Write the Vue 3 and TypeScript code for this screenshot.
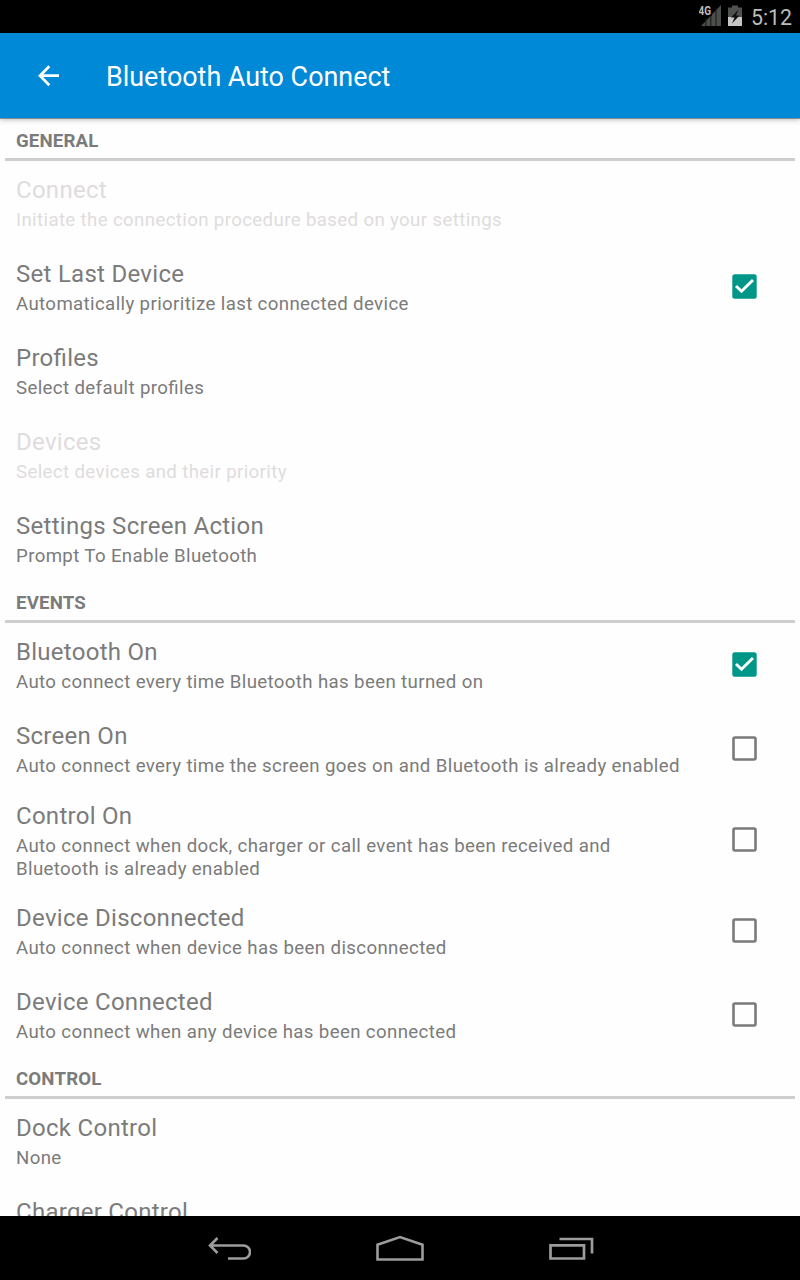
<script setup lang="ts">
interface Pref {
  title: string
  summary: string[]
  disabled?: boolean
  checked?: boolean
}
interface Section {
  name: string
  items: Pref[]
}

const sections: Section[] = [
  {
    name: 'GENERAL',
    items: [
      { title: 'Connect', summary: ['Initiate the connection procedure based on your settings'], disabled: true },
      { title: 'Set Last Device', summary: ['Automatically prioritize last connected device'], checked: true },
      { title: 'Profiles', summary: ['Select default profiles'] },
      { title: 'Devices', summary: ['Select devices and their priority'], disabled: true },
      { title: 'Settings Screen Action', summary: ['Prompt To Enable Bluetooth'] },
    ],
  },
  {
    name: 'EVENTS',
    items: [
      { title: 'Bluetooth On', summary: ['Auto connect every time Bluetooth has been turned on'], checked: true },
      { title: 'Screen On', summary: ['Auto connect every time the screen goes on and Bluetooth is already enabled'], checked: false },
      { title: 'Control On', summary: ['Auto connect when dock, charger or call event has been received and', 'Bluetooth is already enabled'], checked: false },
      { title: 'Device Disconnected', summary: ['Auto connect when device has been disconnected'], checked: false },
      { title: 'Device Connected', summary: ['Auto connect when any device has been connected'], checked: false },
    ],
  },
  {
    name: 'CONTROL',
    items: [
      { title: 'Dock Control', summary: ['None'] },
      { title: 'Charger Control', summary: [] },
    ],
  },
]

const hasCheckbox = (p: Pref): boolean => typeof p.checked === 'boolean'
</script>

<template>
  <div class="screen">
    <div class="status">
      <svg class="status-icons" width="46" height="33" viewBox="0 0 46 33">
        <path d="M2 26L22 5V26Z" fill="#4c4e4c" />
        <path d="M6.800 18V26M11.800 13V26M17 8V26" stroke="#1c1c1c" stroke-width="1.100" />
        <rect x="0" y="4" width="13" height="12" fill="#000" />
        <text x="-0.5" y="15" class="net" textLength="12.5" lengthAdjust="spacingAndGlyphs">4G</text>
        <path d="M33 5.500H39V7.500H43V17H29V7.500H33Z" fill="#505250" />
        <rect x="29" y="17" width="14" height="9" fill="#c6c6c6" />
        <path d="M39.500 9.500L32 17.500H35.500L33 23.500L40.500 15.500H37Z" fill="#111" />
      </svg>
      <span class="clock">5:12</span>
    </div>
    <header class="toolbar">
      <svg class="back" width="22" height="22" viewBox="0 0 22 22" fill="none" stroke="#fff" stroke-width="2.700">
        <path d="M21 10.700H2.500M11.300 1.200L2 10.700L11.300 20.200" />
      </svg>
      <h1>Bluetooth Auto Connect</h1>
    </header>
    <main class="list">
      <section v-for="s in sections" :key="s.name">
        <h2>{{ s.name }}</h2>
        <div
          v-for="p in s.items"
          :key="p.title"
          class="row"
          :class="{ disabled: p.disabled, tall: p.summary.length > 1 }"
        >
          <div class="texts">
            <div class="title">{{ p.title }}</div>
            <div v-for="line in p.summary" :key="line" class="summary">{{ line }}</div>
          </div>
          <svg v-if="hasCheckbox(p)" class="check" width="26" height="26" viewBox="0 0 26 26" fill="none">
            <template v-if="p.checked">
              <rect x="0.300" y="0.300" width="24.400" height="24.400" rx="2.500" fill="#009688" />
              <path d="M4 12L9.500 17.300L21 6" stroke="#fff" stroke-width="2.900" />
            </template>
            <rect v-else x="1.500" y="1.500" width="22" height="22" rx="1.500" stroke="#7a7a7a" stroke-width="2.600" />
          </svg>
        </div>
      </section>
    </main>
    <nav class="navbar">
      <svg width="46" height="26" viewBox="0 0 46 26" fill="none" stroke="#9c9c9c" stroke-width="2.600">
        <path d="M4.500 10.500H38.500A6.500 6.500 0 0 1 38.500 23.500H23M12.500 3L5 10.500L12.500 18" />
      </svg>
      <svg width="50" height="28" viewBox="0 0 50 28" fill="none" stroke="#9c9c9c" stroke-width="2.600">
        <path d="M2.500 25.500V10.700L25 3L47.500 10.700V25.500Z" />
      </svg>
      <svg width="46" height="26" viewBox="0 0 46 26" fill="none" stroke="#9c9c9c" stroke-width="2.700">
        <path d="M1.500 10.300H35V23.500H1.500ZM10.500 4H43V18.500" />
      </svg>
    </nav>
  </div>
</template>

<style>
body {
  background: #fff;
}
</style>

<style scoped>
.screen {
  width: 800px;
  height: 1280px;
  display: flex;
  flex-direction: column;
  overflow: hidden;
  background: #fefefe;
  font-family: Roboto, sans-serif;
  color: #7b7b7b;
}
.status {
  height: 33px;
  flex: none;
  display: flex;
  justify-content: flex-end;
  background: #000;
  padding-right: 8px;
}
.status-icons {
  margin-right: 6px;
}
.net {
  font: bold 12px Roboto, sans-serif;
  fill: #bdbdbd;
}
.clock {
  font-size: 21.3px;
  line-height: 35px;
  color: #bcbcbc;
}
.toolbar {
  height: 85px;
  flex: none;
  display: flex;
  align-items: center;
  background: #0089d7;
  padding-left: 38px;
  border-bottom: 1px solid #808a90;
  box-shadow: 0 1px 5px rgba(0, 0, 0, 0.25);
  z-index: 1;
}
h1 {
  margin: 2px 0 0 46px;
  font-size: 26.9px;
  font-weight: 400;
  color: #fff;
}
.list {
  flex: 1;
  min-height: 0;
  overflow: hidden;
}
h2 {
  box-sizing: border-box;
  height: 42px;
  margin: 0 5px;
  padding-left: 11px;
  border-bottom: 3px solid #cecece;
  font-size: 18.66px;
  line-height: 45px;
  letter-spacing: 0.15px;
  font-weight: 700;
}
.row {
  box-sizing: border-box;
  height: 84px;
  display: flex;
  justify-content: space-between;
  padding: 13px 42px 0 16px;
}
.row.tall {
  height: 98px;
  padding-top: 9px;
}
.title {
  font-size: 24px;
  line-height: 32px;
  letter-spacing: 0.28px;
  font-feature-settings: 'liga' 1;
}
.summary {
  font-size: 18.66px;
  line-height: 23px;
  letter-spacing: 0.365px;
  font-feature-settings: 'liga' 1;
  white-space: nowrap;
}
.title + .summary {
  margin-top: 3px;
}
.check {
  margin-top: 16px;
}
.tall .check {
  margin-top: 27px;
}
.disabled {
  color: #dedcdd;
}
.navbar {
  height: 64px;
  flex: none;
  display: flex;
  justify-content: center;
  align-items: center;
  gap: 124px;
  background: #000;
}
</style>
